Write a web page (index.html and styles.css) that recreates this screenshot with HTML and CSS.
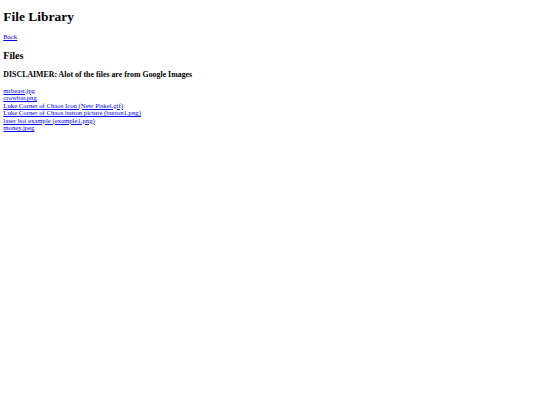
FILE: index.html
```html
<!DOCTYPE html>
<html>
<head>
<meta charset="utf-8">
<title>File Library</title>
<link rel="stylesheet" href="styles.css">
</head>
<body class="page">
<h1 class="title">File Library</h1>
<a class="link" href="#">Back</a>
<h2 class="section">Files</h2>
<h3 class="note">DISCLAIMER: Alot of the files are from Google Images</h3>
<div class="files">
<a class="link" href="#">mrbeast.jpg</a><br>
<a class="link" href="#">crowbar.png</a><br>
<a class="link" href="#">Luke Corner of Chaos Icon (New Piskel.gif)</a><br>
<a class="link" href="#">Luke Corner of Chaos button picture (button1.png)</a><br>
<a class="link" href="#">laser boi example (example1.png)</a><br>
<a class="link" href="#">money.jpeg</a>
</div>
</body>
</html>
```

FILE: styles.css
```css
html { background: #fff; }
.page {
  margin: 3.36px;
  font-family: "Liberation Serif", "Times New Roman", serif;
  font-size: 6.72px;
  line-height: 7.6px;
  color: #000;
}
.title {
  font-size: 13.44px;
  line-height: 15.5px;
  margin: 6px 0 8px;
  font-weight: bold;
}
.section {
  font-size: 10.08px;
  line-height: 11.6px;
  margin: 9.4px 0 8.4px;
  font-weight: bold;
}
.note {
  font-size: 7.86px;
  line-height: 9px;
  margin: 8.9px 0 7.4px;
  font-weight: bold;
}
.files {
  line-height: 7.5px;
}
.link {
  color: #0000ee;
  text-decoration: underline;
}
```
